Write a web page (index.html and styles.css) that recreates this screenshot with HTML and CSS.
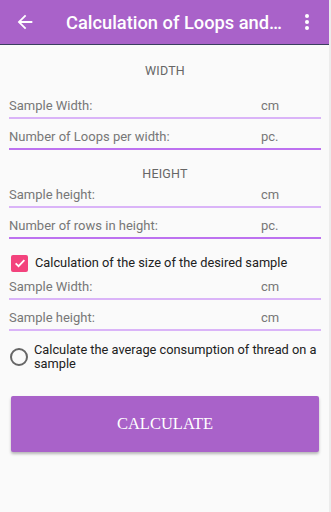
FILE: index.html
```html
<!DOCTYPE html>
<html>
<head>
<meta charset="utf-8">
<link rel="stylesheet" href="styles.css">
</head>
<body>
<div class="screen">
  <header class="appbar">
    <svg class="back" viewBox="0 0 24 24" width="22" height="22"><path fill="#fff" d="M20 11H7.83l5.59-5.59L12 4l-8 8 8 8 1.41-1.41L7.83 13H20v-2z"/></svg>
    <div class="title">Calculation of Loops and…</div>
    <div class="more"><span></span><span></span><span></span></div>
  </header>
  <main class="content">
    <div class="section-title first">WIDTH</div>
    <div class="field light lead"><span class="label">Sample Width:</span><span class="unit">cm</span></div>
    <div class="field strong"><span class="label">Number of Loops per width:</span><span class="unit">pc.</span></div>
    <div class="section-title second">HEIGHT</div>
    <div class="field light tight"><span class="label">Sample height:</span><span class="unit">cm</span></div>
    <div class="field strong"><span class="label">Number of rows in height:</span><span class="unit">pc.</span></div>
    <div class="check-row">
      <span class="checkbox"><svg viewBox="0 0 24 24" width="14" height="14"><path fill="none" stroke="#fff" stroke-width="3" d="M4.5 12.5l5 5 10-10.5"/></svg></span>
      <span class="check-label">Calculation of the size of the desired sample</span>
    </div>
    <div class="field light after-check"><span class="label">Sample Width:</span><span class="unit">cm</span></div>
    <div class="field light"><span class="label">Sample height:</span><span class="unit">cm</span></div>
    <div class="radio-row">
      <span class="radio"></span>
      <span class="check-label">Calculate the average consumption of thread on a sample</span>
    </div>
    <button class="calc">CALCULATE</button>
  </main>
</div>
</body>
</html>
```
FILE: styles.css
```css
* { box-sizing: border-box; }
html, body { margin: 0; padding: 0; }
body { width: 331px; height: 512px; overflow: hidden; background: #fafafa; font-family: Roboto, "Noto Sans", sans-serif; }
.screen { width: 331px; height: 512px; display: flex; flex-direction: column; border-right: 2px solid #ececec; }
.appbar { height: 45px; background: #a962c9; border-bottom: 1px solid #3a3f5e; display: flex; align-items: center; color: #fff; flex-shrink: 0; }
.back { margin-left: 14px; flex-shrink: 0; }
.title { margin-left: 30px; font-size: 18.3px; font-weight: 500; white-space: nowrap; flex: 1; }
.more { width: 4px; display: flex; flex-direction: column; gap: 2px; margin-right: 20px; }
.more span { width: 4px; height: 4px; border-radius: 50%; background: #fff; }
.content { padding: 0 8px 0 9px; display: flex; flex-direction: column; }
.section-title { text-align: center; font-size: 12.5px; color: #666; letter-spacing: 0.2px; height: 17px; line-height: 17px; }
.section-title.first { margin-top: 17px; }
.section-title.second { margin-top: 15px; }
.field { display: flex; align-items: flex-end; height: 31px; padding-bottom: 3px; font-size: 13px; color: #777; }
.field.lead { height: 40px; }
.field.tight { height: 26px; }
.field.after-check { height: 28px; }
.field.light { border-bottom: 2px solid #dab4f8; }
.field.strong { border-bottom: 2px solid #bd72f0; }
.label { flex: 1; line-height: 17px; }
.unit { width: 60px; line-height: 17px; }
.check-row { display: flex; align-items: center; margin-top: 15px; height: 18px; }
.checkbox { width: 17px; height: 17px; margin-left: 2px; border-radius: 2px; background: #f3437d; display: flex; align-items: center; justify-content: center; flex-shrink: 0; }
.check-label { margin-left: 7px; font-size: 12.8px; color: #212121; line-height: 14px; }
.radio-row { display: flex; align-items: center; margin-top: 12px; }
.radio { width: 18px; height: 18px; border: 2px solid #666; border-radius: 50%; margin-left: 1px; flex-shrink: 0; }
.radio-row .check-label { margin-left: 6px; }
.calc { margin: 25px 2px 0 2px; height: 56px; border: none; border-radius: 2px; background: #a962c9; color: #fff; font-family: "Liberation Serif", serif; font-size: 16.5px; box-shadow: 0 2px 3px rgba(0,0,0,0.28); }
```
